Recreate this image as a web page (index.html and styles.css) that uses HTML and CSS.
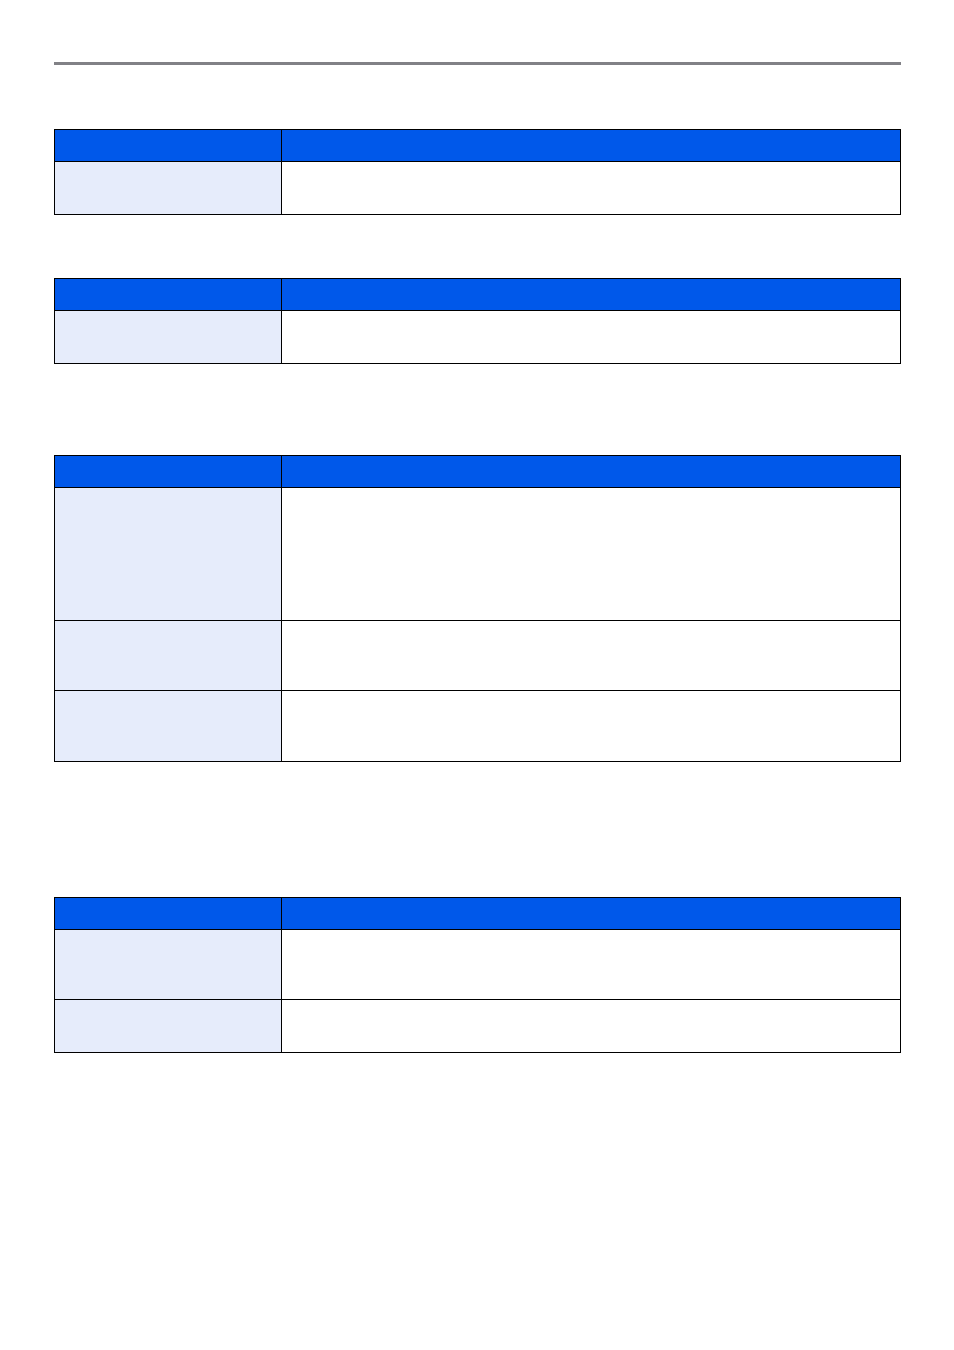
FILE: index.html
```html
<!DOCTYPE html>
<html lang="en">
<head>
<meta charset="utf-8">
<title>Settings tables</title>
<link rel="stylesheet" href="styles.css">
</head>
<body>
<div class="page">
  <div class="rule"></div>

  <div class="tbl tbl-1">
    <div class="row row-head"><div class="cell key"></div><div class="cell val"></div></div>
    <div class="row row-52"><div class="cell key"></div><div class="cell val"></div></div>
  </div>

  <div class="tbl tbl-2">
    <div class="row row-head"><div class="cell key"></div><div class="cell val"></div></div>
    <div class="row row-52"><div class="cell key"></div><div class="cell val"></div></div>
  </div>

  <div class="tbl tbl-3">
    <div class="row row-head"><div class="cell key"></div><div class="cell val"></div></div>
    <div class="row row-132"><div class="cell key"></div><div class="cell val"></div></div>
    <div class="row row-69"><div class="cell key"></div><div class="cell val"></div></div>
    <div class="row row-70"><div class="cell key"></div><div class="cell val"></div></div>
  </div>

  <div class="tbl tbl-4">
    <div class="row row-head"><div class="cell key"></div><div class="cell val"></div></div>
    <div class="row row-69"><div class="cell key"></div><div class="cell val"></div></div>
    <div class="row row-52"><div class="cell key"></div><div class="cell val"></div></div>
  </div>
</div>
</body>
</html>
```

FILE: styles.css
```css
html, body {
  margin: 0;
  padding: 0;
  background: #ffffff;
  font-family: "Liberation Sans", Arial, sans-serif;
}

.page {
  width: 847px;
  margin-left: 54px;
  padding-top: 62px;
}

.rule {
  height: 3px;
  background: #818186;
}

.tbl {
  border: 1px solid #000000;
  display: flex;
  flex-direction: column;
}

.tbl-1 { margin-top: 64px; }
.tbl-2 { margin-top: 63px; }
.tbl-3 { margin-top: 91px; }
.tbl-4 { margin-top: 135px; }

.row {
  display: grid;
  grid-template-columns: 226px 1fr;
}

.row + .row {
  border-top: 1px solid #000000;
}

.row-head { height: 31px; }
.row-52 { height: 52px; }
.row-69 { height: 69px; }
.row-70 { height: 70px; }
.row-132 { height: 132px; }

.cell.val {
  border-left: 1px solid #000000;
}

.row-head .cell {
  background: #0058EA;
}

.row:not(.row-head) .cell.key {
  background: #E6ECFB;
}

.row:not(.row-head) .cell.val {
  background: #ffffff;
}
```
